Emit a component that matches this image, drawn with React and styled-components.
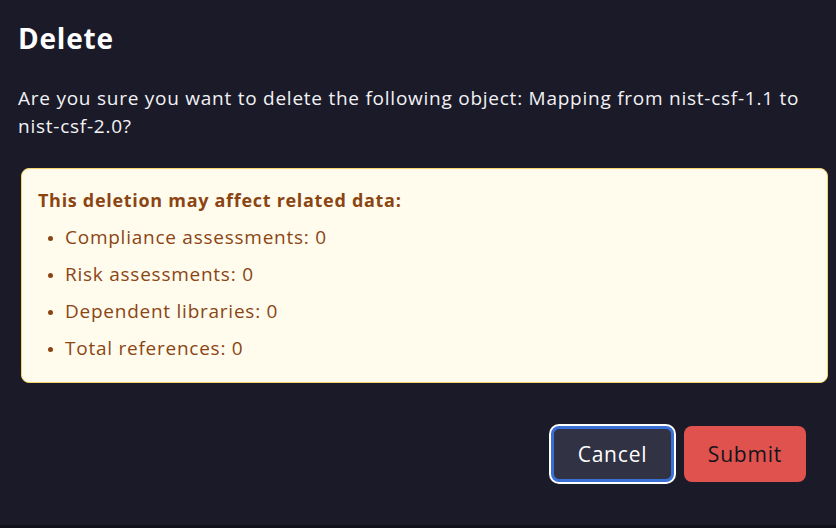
import React from "react";
import styled, { createGlobalStyle } from "styled-components";

const GlobalStyle = createGlobalStyle`
    html, body {
        margin: 0;
        padding: 0;
        background: #12111b;
    }
    * {
        box-sizing: border-box;
    }
`;

const counts = [
    { label: "Compliance assessments", value: 0 },
    { label: "Risk assessments", value: 0 },
    { label: "Dependent libraries", value: 0 },
    { label: "Total references", value: 0 },
];

function App() {
    return (
        <>
            <GlobalStyle />
            <Modal>
                <Title>Delete</Title>
                <Message>
                    Are you sure you want to delete the following object:
                    Mapping from nist-csf-1.1 to nist-csf-2.0?
                </Message>

                <Warning>
                    <WarningTitle>This deletion may affect related data:</WarningTitle>
                    <List>
                        {counts.map((c) => (
                            <Item key={c.label}>
                                {c.label}: {c.value}
                            </Item>
                        ))}
                    </List>
                </Warning>

                <Actions>
                    <Button variant="cancel">Cancel</Button>
                    <Button variant="submit">Submit</Button>
                </Actions>
            </Modal>
        </>
    );
}

export default App;

const Modal = styled.div`
    width: 836px;
    height: 525px;
    background: #1b1a28;
    padding: 18px 30px 0 18px;
    font-family: "Open Sans", "Liberation Sans", sans-serif;
    display: flex;
    flex-direction: column;
`;

const Title = styled.h1`
    margin: 0;
    font-size: 28px;
    line-height: 40px;
    font-weight: 700;
    color: #ffffff;
    letter-spacing: 0.8px;
`;

const Message = styled.p`
    margin: 26px 0 0;
    font-size: 19px;
    line-height: 28px;
    letter-spacing: 0.75px;
    color: #f2f2f5;
    max-width: 800px;
`;

const Warning = styled.div`
    margin: 28px -22px 0 3px;
    height: 215px;
    background: #fffcee;
    border: 1px solid #f6d36b;
    border-radius: 8px;
    padding: 18px 16px 0 16px;
    color: #8b4513;
`;

const WarningTitle = styled.div`
    font-size: 18px;
    line-height: 26px;
    font-weight: 700;
    letter-spacing: 0.7px;
`;

const List = styled.ul`
    margin: 11px 0 0;
    padding: 0 0 0 27px;
    list-style: disc;
`;

const Item = styled.li`
    font-size: 19px;
    line-height: 26px;
    letter-spacing: 0.75px;
    margin-bottom: 11px;
    &::marker {
        font-size: 14px;
    }
`;

const Actions = styled.div`
    margin-top: 43px;
    display: flex;
    justify-content: flex-end;
    gap: 10px;
`;

const Button = styled.button`
    height: 56px;
    padding: 0;
    border-radius: 8px;
    font-family: inherit;
    font-size: 21px;
    letter-spacing: 0.8px;
    cursor: pointer;
    border: ${(p) => (p.variant === "cancel" ? "3px solid #3a6fd6" : "none")};
    background: ${(p) => (p.variant === "cancel" ? "#313244" : "#df524d")};
    color: ${(p) => (p.variant === "cancel" ? "#ffffff" : "#15141c")};
    width: ${(p) => (p.variant === "cancel" ? "123px" : "122px")};
    box-shadow: ${(p) =>
        p.variant === "cancel" ? "0 0 0 2px #ffffff" : "none"};
`;
